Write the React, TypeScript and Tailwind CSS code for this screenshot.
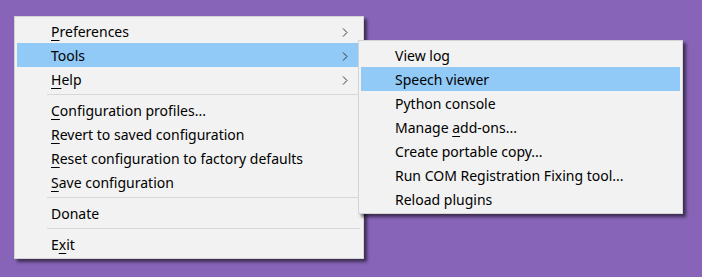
import React from "react";

type Item = { label: string; u?: number; arrow?: boolean; hl?: boolean } | "sep";

const mainItems: Item[] = [
  { label: "Preferences", u: 0, arrow: true },
  { label: "Tools", arrow: true, hl: true },
  { label: "Help", u: 0, arrow: true },
  "sep",
  { label: "Configuration profiles...", u: 0 },
  { label: "Revert to saved configuration", u: 0 },
  { label: "Reset configuration to factory defaults", u: 0 },
  { label: "Save configuration", u: 0 },
  "sep",
  { label: "Donate" },
  "sep",
  { label: "Exit", u: 1 },
];

const subItems: Item[] = [
  { label: "View log" },
  { label: "Speech viewer", hl: true },
  { label: "Python console" },
  { label: "Manage add-ons...", u: 7 },
  { label: "Create portable copy..." },
  { label: "Run COM Registration Fixing tool..." },
  { label: "Reload plugins" },
];

function Label({ text, u }: { text: string; u?: number }) {
  if (u === undefined) return <span>{text}</span>;
  return (
    <span>
      {text.slice(0, u)}
      <span className="underline underline-offset-[3px] decoration-1">{text[u]}</span>
      {text.slice(u + 1)}
    </span>
  );
}

function Chevron() {
  return (
    <svg width="6" height="9" viewBox="0 0 6 9" className="block">
      <path d="M1 0.5 L5 4.5 L1 8.5" fill="none" stroke="#333" strokeWidth="1" />
    </svg>
  );
}

function Menu({ items, width }: { items: Item[]; width: string }) {
  return (
    <div
      className={`${width} bg-[#f2f2f2] border border-[#d4d4d4] p-[2px] shadow-[3px_3px_3px_rgba(0,0,0,0.55)]`}
    >
      {items.map((it, i) =>
        it === "sep" ? (
          <div key={i} className="h-[7px] flex items-center pl-[30px] pr-[1px]">
            <div className="h-px w-full bg-[#d7d7d7]" />
          </div>
        ) : (
          <div
            key={i}
            className={`h-[24px] flex items-center pt-[2px] pl-[34px] pr-[13px] ${it.hl ? "bg-[#91c9f7]" : ""}`}
          >
            <div className="flex-1 whitespace-nowrap">
              <Label text={it.label} u={it.u} />
            </div>
            {it.arrow && <Chevron />}
          </div>
        )
      )}
    </div>
  );
}

export default function App() {
  return (
    <div
      className="relative w-[702px] h-[277px] bg-[#8764b8] pl-[14px] pt-[16px] text-[14px] text-black leading-none"
      style={{ fontFamily: '"Noto Sans", "Open Sans", sans-serif' }}
    >
      <Menu items={mainItems} width="w-[350px]" />
      <div className="absolute left-[358px] top-[40px]">
        <Menu items={subItems} width="w-[325px]" />
      </div>
    </div>
  );
}
